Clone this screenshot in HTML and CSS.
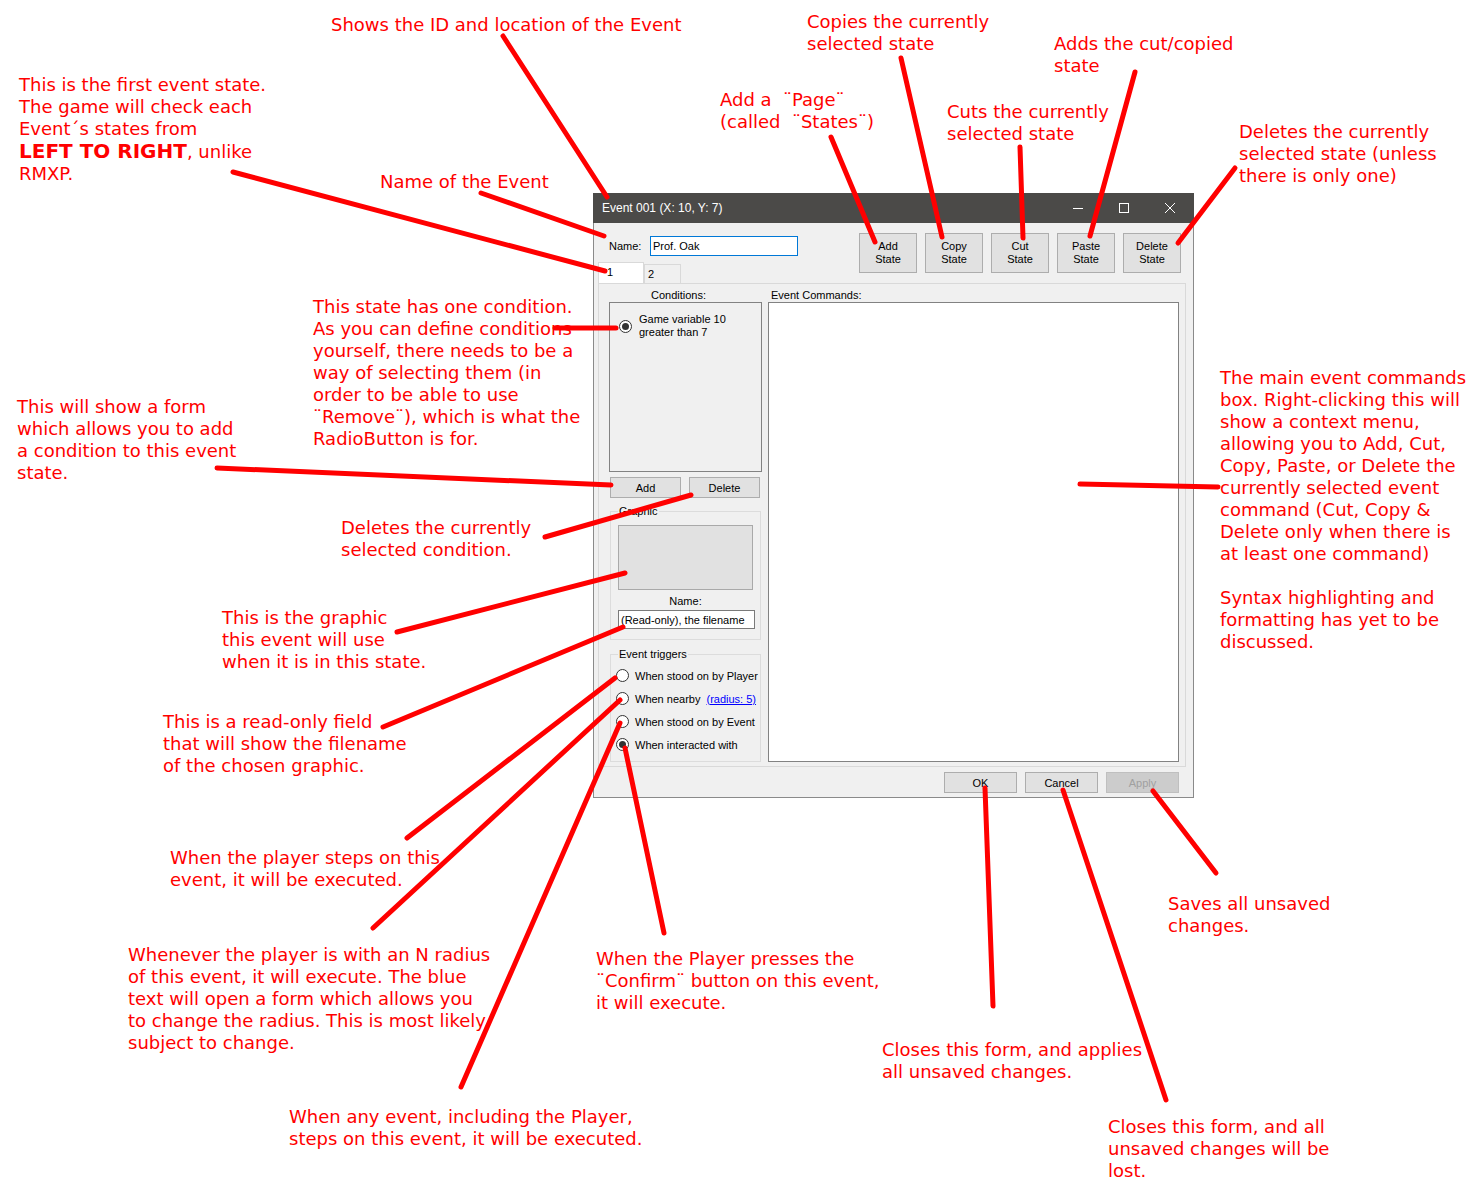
FILE: index.html
```html
<!DOCTYPE html>
<html>
<head>
<meta charset="utf-8">
<link rel="stylesheet" href="styles.css">
</head>
<body>
<div class="canvas">
  <div class="window">
    <div class="titlebar">
      <span class="title">Event 001 (X: 10, Y: 7)</span>
      <div class="controls">
        <svg width="12" height="12" viewBox="0 0 12 12"><line x1="1" y1="6.5" x2="11" y2="6.5" stroke="#fff" stroke-width="1"/></svg>
        <svg width="12" height="12" viewBox="0 0 12 12"><rect x="1.5" y="1.5" width="9" height="9" fill="none" stroke="#fff" stroke-width="1"/></svg>
        <svg width="12" height="12" viewBox="0 0 12 12"><path d="M1 1 L11 11 M11 1 L1 11" stroke="#fff" stroke-width="1"/></svg>
      </div>
    </div>
    <div class="client">
      <div class="head">
        <div class="head-left">
          <div class="name-row">
            <span class="lbl">Name:</span>
            <div class="textbox focus">Prof. Oak</div>
          </div>
          <div class="tabs">
            <div class="tab active">1</div>
            <div class="tab">2</div>
          </div>
        </div>
        <div class="state-buttons">
          <div class="btn tall">Add<br>State</div>
          <div class="btn tall">Copy<br>State</div>
          <div class="btn tall">Cut<br>State</div>
          <div class="btn tall">Paste<br>State</div>
          <div class="btn tall">Delete<br>State</div>
        </div>
      </div>
      <div class="tabpage">
        <div class="col-left">
          <div class="col-label cond">Conditions:</div>
          <div class="cond-box">
            <div class="cond-item">
              <span class="radio checked"></span>
              <span class="cond-text">Game variable 10<br>greater than 7</span>
            </div>
          </div>
          <div class="cond-buttons">
            <div class="btn small add">Add</div>
            <div class="btn small del">Delete</div>
          </div>
          <fieldset class="group graphic">
            <legend>Graphic</legend>
            <div class="gfx"></div>
            <div class="gname">Name:</div>
            <div class="textbox ro">(Read-only), the filename</div>
          </fieldset>
          <fieldset class="group triggers">
            <legend>Event triggers</legend>
            <div class="trig"><span class="radio"></span><span>When stood on by Player</span></div>
            <div class="trig"><span class="radio"></span><span>When nearby <a class="link">(radius: 5)</a></span></div>
            <div class="trig"><span class="radio"></span><span>When stood on by Event</span></div>
            <div class="trig"><span class="radio checked"></span><span>When interacted with</span></div>
          </fieldset>
        </div>
        <div class="col-right">
          <div class="col-label cmd">Event Commands:</div>
          <div class="cmd-box"></div>
        </div>
      </div>
      <div class="footer">
        <div class="btn foot">OK</div>
        <div class="btn foot">Cancel</div>
        <div class="btn foot disabled">Apply</div>
      </div>
    </div>
  </div>

  <div class="note n1">Shows the ID and location of the Event</div>
  <div class="note n2">Copies the currently<br>selected state</div>
  <div class="note n3">Adds the cut/copied<br>state</div>
  <div class="note n4">This is the first event state.<br>The game will check each<br>Event´s states from<br><b>LEFT TO RIGHT</b>, unlike<br>RMXP.</div>
  <div class="note n5">Add a &nbsp;¨Page¨<br>(called &nbsp;¨States¨)</div>
  <div class="note n6">Cuts the currently<br>selected state</div>
  <div class="note n7">Deletes the currently<br>selected state (unless<br>there is only one)</div>
  <div class="note n8">Name of the Event</div>
  <div class="note n9">This state has one condition.<br>As you can define conditions<br>yourself, there needs to be a<br>way of selecting them (in<br>order to be able to use<br>¨Remove¨), which is what the<br>RadioButton is for.</div>
  <div class="note n10">This will show a form<br>which allows you to add<br>a condition to this event<br>state.</div>
  <div class="note n11">The main event commands<br>box. Right-clicking this will<br>show a context menu,<br>allowing you to Add, Cut,<br>Copy, Paste, or Delete the<br>currently selected event<br>command (Cut, Copy &amp;<br>Delete only when there is<br>at least one command)<br><br>Syntax highlighting and<br>formatting has yet to be<br>discussed.</div>
  <div class="note n12">Deletes the currently<br>selected condition.</div>
  <div class="note n13">This is the graphic<br>this event will use<br>when it is in this state.</div>
  <div class="note n14">This is a read-only field<br>that will show the filename<br>of the chosen graphic.</div>
  <div class="note n15">When the player steps on this<br>event, it will be executed.</div>
  <div class="note n16">Saves all unsaved<br>changes.</div>
  <div class="note n17">Whenever the player is with an N radius<br>of this event, it will execute. The blue<br>text will open a form which allows you<br>to change the radius. This is most likely<br>subject to change.</div>
  <div class="note n18">When the Player presses the<br>¨Confirm¨ button on this event,<br>it will execute.</div>
  <div class="note n19">Closes this form, and applies<br>all unsaved changes.</div>
  <div class="note n20">When any event, including the Player,<br>steps on this event, it will be executed.</div>
  <div class="note n21">Closes this form, and all<br>unsaved changes will be<br>lost.</div>

  <svg class="arrows" width="1484" height="1194" viewBox="0 0 1484 1194">
    <g stroke="#ff0000" stroke-width="5" stroke-linecap="round" fill="none">
      <line x1="503" y1="36" x2="607" y2="197"/>
      <line x1="901" y1="58" x2="942" y2="237"/>
      <line x1="1135" y1="72" x2="1090" y2="236"/>
      <line x1="831" y1="137" x2="875" y2="242"/>
      <line x1="1020" y1="147" x2="1023" y2="238"/>
      <line x1="1235" y1="168" x2="1178" y2="243"/>
      <line x1="481" y1="193" x2="604" y2="236"/>
      <line x1="233" y1="172" x2="605" y2="271"/>
      <line x1="555" y1="328" x2="616" y2="328"/>
      <line x1="217" y1="468" x2="611" y2="485"/>
      <line x1="545" y1="537" x2="691" y2="495"/>
      <line x1="397" y1="632" x2="625" y2="573"/>
      <line x1="383" y1="727" x2="623" y2="627"/>
      <line x1="407" y1="838" x2="615" y2="678"/>
      <line x1="373" y1="928" x2="620" y2="700"/>
      <line x1="461" y1="1087" x2="620" y2="723"/>
      <line x1="664" y1="933" x2="625" y2="748"/>
      <line x1="1080" y1="484" x2="1218" y2="487"/>
      <line x1="993" y1="1006" x2="985" y2="788"/>
      <line x1="1166" y1="1100" x2="1063" y2="790"/>
      <line x1="1216" y1="873" x2="1153" y2="791"/>
    </g>
  </svg>
</div>
</body>
</html>
```

FILE: styles.css
```css
html, body {
  margin: 0;
  padding: 0;
  background: #ffffff;
}

.canvas {
  position: relative;
  width: 1484px;
  height: 1194px;
  overflow: hidden;
  background: #ffffff;
}

/* ---------- window ---------- */
.window {
  position: absolute;
  left: 593px;
  top: 193px;
  width: 601px;
  height: 605px;
  display: flex;
  flex-direction: column;
  font-family: "Liberation Sans", Arial, sans-serif;
  font-size: 11px;
  color: #000;
}

.titlebar {
  height: 30px;
  flex: none;
  background: #4b4a48;
  display: flex;
  align-items: center;
  justify-content: space-between;
}

.title {
  color: #ffffff;
  font-size: 12px;
  padding-left: 9px;
}

.controls {
  display: flex;
  gap: 34px;
  padding-right: 18px;
}

.controls svg {
  display: block;
}

.client {
  flex: 1;
  background: #f0f0f0;
  border: 1px solid #8a8a8a;
  border-top: none;
  display: flex;
  flex-direction: column;
}

/* ---------- header ---------- */
.head {
  height: 60px;
  flex: none;
  display: flex;
  justify-content: space-between;
}

.head-left {
  display: flex;
  flex-direction: column;
}

.name-row {
  display: flex;
  align-items: center;
  margin-top: 13px;
  padding-left: 15px;
  height: 20px;
}

.lbl {
  width: 41px;
}

.textbox {
  background: #ffffff;
  border: 1px solid #7a7a7a;
  box-sizing: border-box;
  padding-left: 2px;
  display: flex;
  align-items: center;
  white-space: nowrap;
}

.textbox.focus {
  width: 148px;
  height: 20px;
  border-color: #0078d7;
}

.tabs {
  display: flex;
  align-items: flex-end;
  margin-top: 6px;
  margin-left: 4px;
  height: 21px;
}

.tab {
  box-sizing: border-box;
  border: 1px solid #d9d9d9;
  border-bottom: none;
  background: #f0f0f0;
  height: 19px;
  width: 37px;
  padding-left: 3px;
  line-height: 18px;
}

.tab.active {
  background: #ffffff;
  height: 21px;
  width: 46px;
  padding-left: 8px;
  line-height: 19px;
}

.state-buttons {
  display: flex;
  gap: 8px;
  margin-top: 10px;
  margin-right: 12px;
  align-self: flex-start;
}

.btn {
  box-sizing: border-box;
  background: #e1e1e1;
  border: 1px solid #adadad;
  display: flex;
  align-items: center;
  justify-content: center;
  text-align: center;
}

.btn.tall {
  width: 58px;
  height: 40px;
  line-height: 13px;
}

/* ---------- tab page ---------- */
.tabpage {
  height: 484px;
  box-sizing: border-box;
  flex: none;
  margin-left: 4px;
  margin-right: 7px;
  border: 1px solid #d9d9d9;
  background: #f0f0f0;
  padding: 4px 6px 4px 10px;
  display: flex;
  gap: 6px;
}

.col-left {
  width: 153px;
  display: flex;
  flex-direction: column;
}

.col-right {
  flex: 1;
  display: flex;
  flex-direction: column;
}

.col-label {
  height: 14px;
  line-height: 14px;
}

.col-label.cond {
  padding-left: 42px;
}

.col-label.cmd {
  padding-left: 3px;
}

.cond-box {
  height: 170px;
  box-sizing: border-box;
  border: 1px solid #828282;
  background: #f0f0f0;
  padding: 10px 0 0 9px;
}

.cond-item {
  display: flex;
  align-items: center;
  gap: 7px;
}

.cond-text {
  line-height: 13px;
}

.radio {
  width: 13px;
  height: 13px;
  box-sizing: border-box;
  border: 1px solid #333333;
  border-radius: 50%;
  background: #ffffff;
  display: inline-flex;
  align-items: center;
  justify-content: center;
  flex: none;
}

.radio.checked::after {
  content: "";
  width: 7px;
  height: 7px;
  border-radius: 50%;
  background: #333333;
}

.cond-buttons {
  display: flex;
  gap: 8px;
  margin-top: 5px;
  margin-left: 1px;
}

.btn.small {
  width: 71px;
  height: 21px;
}

.group {
  margin: 0;
  margin-left: 1px;
  width: 151px;
  box-sizing: border-box;
  border: 1px solid #dcdcdc;
  padding: 0;
  min-width: 0;
}

.group legend {
  margin-left: 7px;
  padding: 0 1px;
  line-height: 13px;
  font-size: 11px;
}

.graphic {
  margin-top: 7px;
  height: 135px;
  display: flex;
  flex-direction: column;
}

.gfx {
  margin-top: 7px;
  margin-left: 7px;
  width: 135px;
  height: 65px;
  box-sizing: border-box;
  background: #e1e1e1;
  border: 1px solid #a9a9a9;
}

.gname {
  text-align: center;
  margin-top: 5px;
  line-height: 13px;
}

.textbox.ro {
  margin-top: 2px;
  margin-left: 7px;
  width: 137px;
  height: 19px;
}

.triggers {
  margin-top: 8px;
  height: 114px;
  padding: 3px 0 0 5px;
}

.triggers legend {
  margin-left: 2px;
}

.trig {
  display: flex;
  align-items: center;
  gap: 6px;
  height: 23px;
}

.link {
  color: #0000ff;
  text-decoration: underline;
  margin-left: 3px;
}

.cmd-box {
  height: 460px;
  box-sizing: border-box;
  background: #ffffff;
  border: 1px solid #828282;
}

/* ---------- footer ---------- */
.footer {
  display: flex;
  justify-content: flex-end;
  gap: 8px;
  margin-top: 5px;
  margin-right: 14px;
}

.btn.foot {
  width: 73px;
  height: 21px;
}

.btn.disabled {
  background: #cccccc;
  border-color: #bfbfbf;
  color: #a0a0a0;
}

/* ---------- annotations ---------- */
.note {
  position: absolute;
  color: #ff0000;
  font-family: "DejaVu Sans", Verdana, sans-serif;
  font-size: 18px;
  line-height: 22px;
  white-space: nowrap;
}

.note b {
  font-weight: bold;
  font-size: 20px;
  line-height: 22px;
}

.n1 { left: 331px; top: 14px; }
.n2 { left: 807px; top: 11px; }
.n3 { left: 1054px; top: 33px; }
.n4 { left: 19px; top: 74px; }
.n5 { left: 720px; top: 89px; }
.n6 { left: 947px; top: 101px; }
.n7 { left: 1239px; top: 121px; }
.n8 { left: 380px; top: 171px; }
.n9 { left: 313px; top: 296px; }
.n10 { left: 17px; top: 396px; }
.n11 { left: 1220px; top: 367px; }
.n12 { left: 341px; top: 517px; }
.n13 { left: 222px; top: 607px; }
.n14 { left: 163px; top: 711px; }
.n15 { left: 170px; top: 847px; }
.n16 { left: 1168px; top: 893px; }
.n17 { left: 128px; top: 944px; }
.n18 { left: 596px; top: 948px; }
.n19 { left: 882px; top: 1039px; }
.n20 { left: 289px; top: 1106px; }
.n21 { left: 1108px; top: 1116px; }

.arrows {
  position: absolute;
  left: 0;
  top: 0;
  pointer-events: none;
}
```
